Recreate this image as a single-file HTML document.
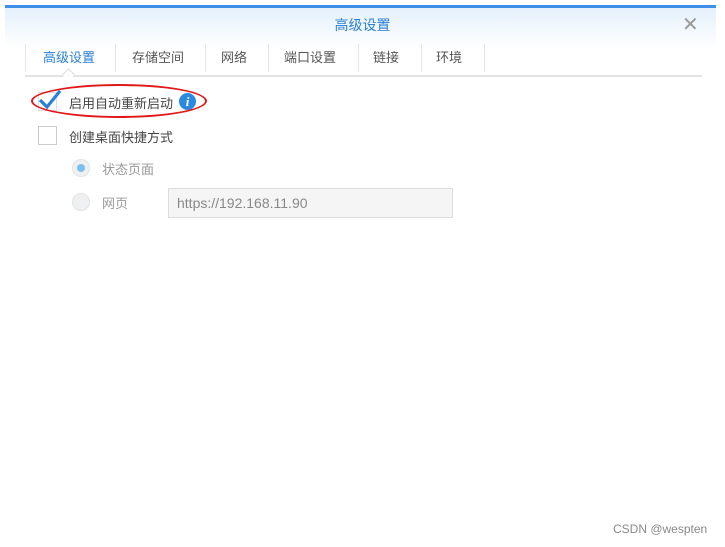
<!DOCTYPE html>
<html><head><meta charset="utf-8"><style>
body{margin:0;width:725px;height:547px;background:#fff;position:relative;overflow:hidden;font-family:"Liberation Sans","Noto Sans CJK SC",sans-serif;}
.abs{position:absolute;}
.t{font-size:13px;color:#555;}
</style></head><body>
<div class="abs" style="left:5px;top:5px;width:711px;height:3px;background:#3d8fe8"></div>
<div class="abs" style="left:5px;top:8px;width:711px;height:40px;background:linear-gradient(#e4f0fb,#fff)"></div>
<div class="abs" style="left:0;top:15px;width:725px;text-align:center;font-size:14px;color:#2a7fd8">高级设置</div>
<div class="abs" style="left:682px;top:12px;font-size:20px;color:#999;font-family:'DejaVu Sans',sans-serif">✕</div>
<div class="abs" style="left:25px;top:44px;width:1px;height:28px;background:#e6e6e6"></div>
<div class="abs t" style="left:43px;top:47px;color:#2a7fd8">高级设置</div>
<div class="abs" style="left:115px;top:44px;width:1px;height:28px;background:#e6e6e6"></div>
<div class="abs t" style="left:132px;top:47px">存储空间</div>
<div class="abs" style="left:205px;top:44px;width:1px;height:28px;background:#e6e6e6"></div>
<div class="abs t" style="left:221px;top:47px">网络</div>
<div class="abs" style="left:268px;top:44px;width:1px;height:28px;background:#e6e6e6"></div>
<div class="abs t" style="left:284px;top:47px">端口设置</div>
<div class="abs" style="left:358px;top:44px;width:1px;height:28px;background:#e6e6e6"></div>
<div class="abs t" style="left:373px;top:47px">链接</div>
<div class="abs" style="left:421px;top:44px;width:1px;height:28px;background:#e6e6e6"></div>
<div class="abs t" style="left:436px;top:47px">环境</div>
<div class="abs" style="left:484px;top:44px;width:1px;height:28px;background:#e6e6e6"></div>
<div class="abs" style="left:25px;top:75px;width:677px;height:2px;background:#e3e3e3"></div>
<div class="abs" style="left:64px;top:70px;width:8px;height:8px;background:#fff;border-left:1px solid #ddd;border-top:1px solid #ddd;transform:rotate(45deg)"></div>
<div class="abs" style="left:38px;top:92px;width:19px;height:19px;border:1px solid #ddd;box-sizing:border-box"></div>
<svg class="abs" style="left:37px;top:87px" width="26" height="24"><path d="M3 13 L10 20 L23 4" stroke="#2a7fd8" stroke-width="3.2" fill="none"/></svg>
<div class="abs t" style="left:69px;top:93px;color:#444">启用自动重新启动</div>
<div class="abs" style="left:179px;top:93px;width:17px;height:17px;border-radius:50%;background:#2a8ae0;color:#fff;font-size:13px;font-style:italic;font-weight:bold;text-align:center;line-height:17px;font-family:'Liberation Serif',serif">i</div>
<div class="abs" style="left:31px;top:84px;width:176px;height:34px;border:2px solid #e01818;border-radius:50%;box-sizing:border-box"></div>
<div class="abs" style="left:38px;top:126px;width:19px;height:19px;border:1px solid #ccc;box-sizing:border-box;background:#fff"></div>
<div class="abs t" style="left:69px;top:127px;color:#444">创建桌面快捷方式</div>
<div class="abs" style="left:72px;top:159px;width:18px;height:18px;border-radius:50%;background:#eef0f2;border:1px solid #e2e2e2;box-sizing:border-box"></div>
<div class="abs" style="left:77px;top:164px;width:8px;height:8px;border-radius:50%;background:#7cc0ef"></div>
<div class="abs t" style="left:102px;top:159px;color:#999">状态页面</div>
<div class="abs" style="left:72px;top:193px;width:18px;height:18px;border-radius:50%;background:#eef0f2;border:1px solid #e2e2e2;box-sizing:border-box"></div>
<div class="abs t" style="left:102px;top:193px;color:#999">网页</div>
<div class="abs" style="left:168px;top:188px;width:285px;height:30px;border:1px solid #ddd;background:#f5f5f5;box-sizing:border-box"></div>
<div class="abs" style="left:177px;top:195px;font-size:14px;color:#888">https://192.168.11.90</div>
<div class="abs" style="left:613px;top:522px;font-size:12px;color:#888">CSDN @wespten</div>
</body></html>
